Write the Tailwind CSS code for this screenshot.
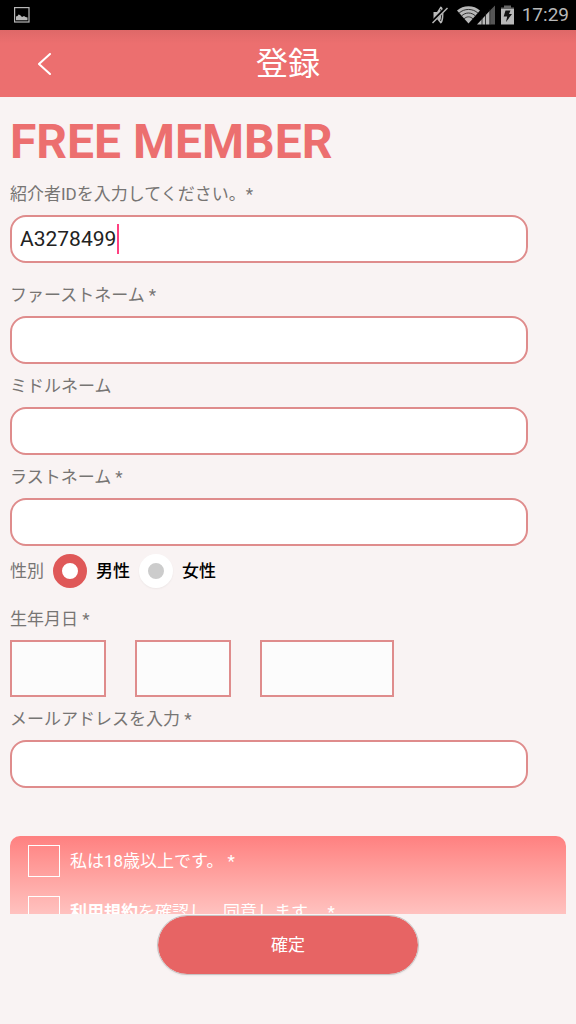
<!DOCTYPE html>
<html lang="ja">
<head>
  <meta charset="UTF-8" />
  <meta name="viewport" content="width=device-width, initial-scale=1.0"/>
  <title>登録</title>
  <script src="https://cdn.jsdelivr.net/npm/@tailwindcss/browser@4"></script>
</head>
<body class="h-screen flex flex-col bg-[#f9f3f3] text-[17px] leading-6 text-[#777573] font-['Roboto','Noto_Sans_CJK_JP',sans-serif]">

  <!-- Status bar -->
  <div class="h-[30px] shrink-0 bg-black flex items-center justify-between pl-[14px] pr-[7px] text-[#b8b8b8]">
    <svg class="w-4 h-4" viewBox="0 0 16 16" fill="none">
      <rect x="0.6" y="0.6" width="14.4" height="14.4" stroke="currentColor" stroke-width="1.2"/>
      <path d="M2 13.200V9.500l1.500-.5 1-1.500 1.500.5 2 2 2-1 1.500 1 2 .5v2.700z" fill="currentColor"/>
    </svg>
    <div class="flex items-center">
      <svg class="w-4 h-5 mr-[9px]" viewBox="0 0 16 20">
        <path d="M1.500 7h3.500L8.500 1.500C12.500 1 12.500 19 8.500 18.500L5 14H1.500z" fill="currentColor"/>
        <path d="M8.500 4c1.500 3 1.500 9 0 12" fill="none" stroke="#000" stroke-width="0.800"/>
        <path d="M0 17L15 2" stroke="#000" stroke-width="3"/>
        <path d="M0.500 18L15.500 3" stroke="currentColor" stroke-width="1.500"/>
      </svg>
      <svg class="w-[23px] h-[18px] -mr-[3px]" viewBox="0 0 23 18">
        <path d="M11.500 17.500L0 4.500C6-1.300 17-1.300 23 4.500z" fill="currentColor"/>
        <g fill="none" stroke="#222" stroke-width="0.900">
          <path d="M2 7.200c5-5 14-5 19 0"/>
          <path d="M4.500 10c4-4 10-4 14 0"/>
          <path d="M7 12.800c3-2.600 6-2.600 9 0"/>
        </g>
      </svg>
      <svg class="w-[18px] h-5 mr-[6px]" viewBox="0 0 18 20">
        <path d="M0 19.500L13.500 5v14.500z" fill="currentColor"/>
        <path d="M13.500 5L18 0.500v19h-4.500z" fill="#555"/>
        <path d="M5 12v8M8.500 8v12M12.800 4v16" stroke="#111" stroke-width="0.800"/>
      </svg>
      <svg class="w-[13px] h-5 mr-2" viewBox="0 0 13 20">
        <path d="M3 0.500h7v2h3v3H0v-3h3z" fill="#666"/>
        <path d="M0 4h13v15.500H0z" fill="currentColor"/>
        <path d="M4.500 5.500h5L8 9h3l-6 8 1.200-5.500H2.700z" fill="#111"/>
      </svg>
      <span class="text-[19px]">17:29</span>
    </div>
  </div>

  <!-- Header -->
  <header class="h-[67px] shrink-0 grid grid-cols-[80px_1fr_80px] items-center bg-linear-to-b from-[#de6868] to-[#ec6f6f] to-20% text-white">
    <button type="button" aria-label="戻る" class="h-full pl-[38px]">
      <svg class="w-[13px] h-[22px]" viewBox="0 0 13 22" fill="none" stroke="currentColor" stroke-width="2" stroke-linecap="round">
        <path d="M12 1L1 11l11 10"/>
      </svg>
    </button>
    <h1 class="text-center text-[32px] leading-10">登録</h1>
  </header>

  <!-- Form -->
  <main class="flex-1 min-h-0 overflow-hidden">
    <form id="registerForm">
      <div class="pl-[10px] pr-12">
        <h2 class="pt-[17px] pb-3 text-[48px] leading-14 font-bold text-[#ec6f6f]">FREE MEMBER</h2>

        <div class="mb-5">
          <label for="referrer" class="block mb-[9px]">紹介者IDを入力してください。*</label>
          <div class="relative">
            <input id="referrer" type="text" value="A3278499" class="block w-full h-12 px-2 rounded-2xl border-2 border-[#df8c8c] bg-white text-[21px] text-[#222] caret-transparent outline-none" />
            <span class="absolute left-[107px] top-[9px] w-[2px] h-[30px] bg-[#ff4081]"></span>
          </div>
        </div>

        <div class="mb-[10px]">
          <label for="firstName" class="block mb-[9px]">ファーストネーム *</label>
          <input id="firstName" type="text" class="block w-full h-12 px-2 rounded-2xl border-2 border-[#df8c8c] bg-white text-[21px] text-[#222]" />
        </div>

        <div class="mb-[10px]">
          <label for="middleName" class="block mb-[9px]">ミドルネーム</label>
          <input id="middleName" type="text" class="block w-full h-12 px-2 rounded-2xl border-2 border-[#df8c8c] bg-white text-[21px] text-[#222]" />
        </div>

        <div class="mb-2">
          <label for="lastName" class="block mb-[9px]">ラストネーム *</label>
          <input id="lastName" type="text" class="block w-full h-12 px-2 rounded-2xl border-2 border-[#df8c8c] bg-white text-[21px] text-[#222]" />
        </div>

        <div role="radiogroup" aria-labelledby="genderLabel" class="flex items-center mb-[19px]">
          <span id="genderLabel" class="mr-[9px]">性別</span>
          <input id="male" type="radio" name="gender" checked class="appearance-none size-[34px] mr-[9px] rounded-full border-9 border-white bg-[#ccc] checked:border-[#df5858] checked:bg-white" />
          <label for="male" class="mr-[9px] font-medium text-black">男性</label>
          <input id="female" type="radio" name="gender" class="appearance-none size-[34px] mr-[9px] rounded-full border-9 border-white bg-[#ccc] shadow-xs checked:border-[#df5858] checked:bg-white" />
          <label for="female" class="font-medium text-black">女性</label>
        </div>

        <div role="group" aria-labelledby="birthLabel" class="mb-[10px]">
          <span id="birthLabel" class="block mb-[9px]">生年月日 *</span>
          <div class="flex gap-[29px]">
            <select aria-label="日" class="appearance-none w-24 h-[57px] border-2 border-[#df8c8c] bg-[#fcfcfc]"></select>
            <select aria-label="月" class="appearance-none w-24 h-[57px] border-2 border-[#df8c8c] bg-[#fcfcfc]"></select>
            <select aria-label="年" class="appearance-none w-[134px] h-[57px] border-2 border-[#df8c8c] bg-[#fcfcfc]"></select>
          </div>
        </div>

        <div class="mb-12">
          <label for="email" class="block mb-[9px]">メールアドレスを入力 *</label>
          <input id="email" type="email" class="block w-full h-12 px-2 rounded-2xl border-2 border-[#df8c8c] bg-white text-[21px] text-[#222]" />
        </div>
      </div>

      <!-- Agreements -->
      <div class="mx-[10px] pt-[9px] pb-12 pl-[18px] flex flex-col gap-[19px] rounded-t-[10px] bg-linear-to-b from-[#fe8080] to-[#f9f3f3] text-white">
        <div class="flex items-center gap-[10px]">
          <input id="adult" type="checkbox" class="appearance-none size-8 border border-white" />
          <label for="adult">私は18歳以上です。 *</label>
        </div>
        <div class="flex items-center gap-[10px]">
          <input id="terms" type="checkbox" class="appearance-none size-8 border border-white" />
          <label for="terms"><b>利用規約</b>を確認し、同意します。 *</label>
        </div>
      </div>
    </form>
  </main>

  <!-- Submit -->
  <footer class="h-[110px] shrink-0 flex justify-center items-start pt-px">
    <button type="submit" form="registerForm" class="w-[262px] h-[60px] rounded-full border border-[#c8c4c4] bg-[#e76464] bg-clip-padding text-white shadow-xs">確定</button>
  </footer>

</body>
</html>
